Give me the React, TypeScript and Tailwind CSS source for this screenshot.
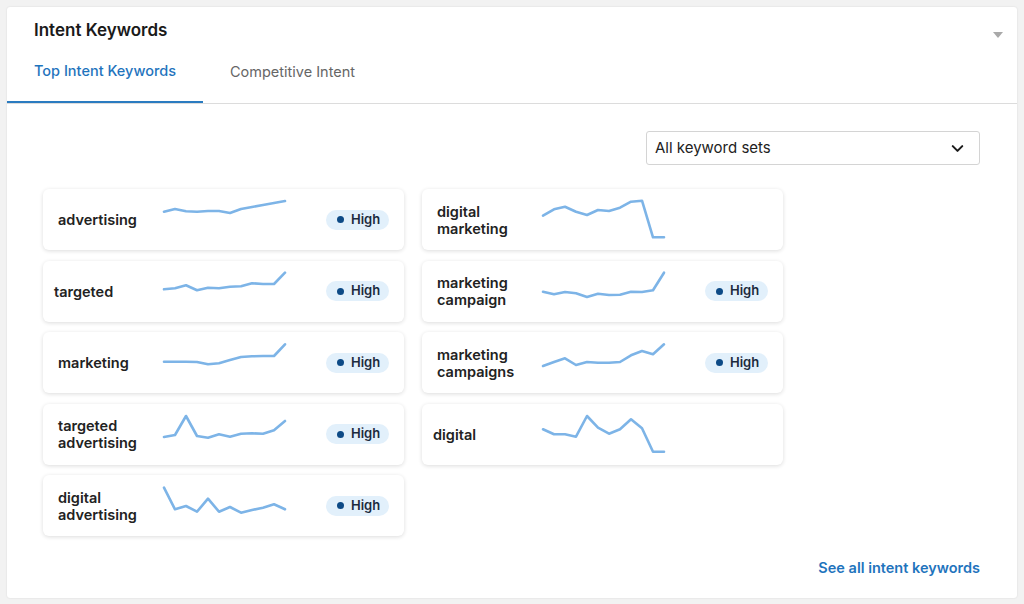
import { ChevronDown } from 'lucide-react';

interface Keyword {
  label: string[];
  points: number[];
  high: boolean;
  indent?: boolean;
}

const LEFT: Keyword[] = [
  { label: ['advertising'], points: [22.7, 20, 22.3, 22.7, 22, 22, 24, 20, 18, 16, 14, 12], high: true },
  { label: ['targeted'], points: [28.3, 27.3, 24.3, 29.3, 26.7, 27.3, 25.7, 25.3, 22.3, 23, 23, 11.7], high: true, indent: true },
  { label: ['marketing'], points: [29.7, 29.7, 29.7, 30, 32.3, 31.3, 28, 25, 24.3, 24, 24, 12.3], high: true },
  { label: ['targeted', 'advertising'], points: [33, 31, 12, 32, 33.7, 30.3, 32.7, 29.7, 29.3, 29.7, 26.3, 17], high: true },
  { label: ['digital', 'advertising'], points: [12.7, 34.3, 31, 36.7, 23.7, 36.7, 32, 37.7, 35, 32.7, 29.3, 34.3], high: true },
];

const RIGHT: Keyword[] = [
  { label: ['digital', 'marketing'], points: [26.7, 20.3, 17.7, 22.7, 26, 21, 22, 18.7, 12.7, 11.7, 48.3, 48.3], high: false },
  { label: ['marketing', 'campaign'], points: [30.7, 33.3, 31, 32.3, 36, 32.7, 34, 33.7, 30.7, 31, 29.3, 11.7], high: true },
  { label: ['marketing', 'campaigns'], points: [34, 30, 26.3, 33, 30, 30.7, 30.7, 30, 23.3, 19, 22.3, 12.3], high: true },
  { label: ['digital'], points: [25.3, 30.3, 30.3, 32.7, 12, 23.7, 29.7, 25.3, 15.3, 24.3, 47.7, 47.7], high: false, indent: true },
];

function Sparkline({ points }: { points: number[] }) {
  const d = points.map((y, i) => `${(i * 11 + 1).toFixed(1)},${y}`).join(' ');
  return (
    <svg width="126" height="61" viewBox="0 0 126 61" className="shrink-0 overflow-visible">
      <polyline
        points={d}
        fill="none"
        stroke="#7db4e7"
        strokeWidth="2.6"
        strokeLinejoin="round"
        strokeLinecap="round"
      />
    </svg>
  );
}

function KeywordCard({ kw }: { kw: Keyword }) {
  return (
    <div className="flex h-[61px] w-[361px] items-center rounded-md bg-white pr-[15px] shadow-[0_1px_4px_rgba(0,0,0,0.14)]">
      <div className={`w-[120px] shrink-0 text-[14.5px] font-semibold leading-[17px] text-[#222] ${kw.indent ? 'pl-[11px]' : 'pl-[15px]'}`}>
        {kw.label.map((l) => (
          <div key={l}>{l}</div>
        ))}
      </div>
      <Sparkline points={kw.points} />
      <div className="flex-1" />
      {kw.high && (
        <div className="flex h-[20px] w-[63px] items-center gap-[7px] rounded-full bg-[#e2f0fb] pl-[11px]">
          <span className="h-[7px] w-[7px] rounded-full bg-[#0d4a86]" />
          <span className="text-[13px] font-semibold text-[#1c2a3d]">High</span>
        </div>
      )}
    </div>
  );
}

export default function App() {
  return (
    <div className="min-h-[604px] bg-[#f2f2f2] p-[7px] font-['Inter',sans-serif]">
      <div className="relative h-[591px] w-[1010px] rounded-[3px] bg-white shadow-[0_0_2px_rgba(0,0,0,0.12)]">
        <div className="pl-[27px] pt-[15px]">
          <h2 className="text-[17px] font-semibold leading-[17px] text-[#1a1a1a]">Intent Keywords</h2>
        </div>
        <div className="absolute right-[14px] top-[25px] h-0 w-0 border-x-[5px] border-t-[6px] border-x-transparent border-t-[#a9a9a9]" />

        <div className="flex border-b border-[#dcdcdc]">
          <div className="flex h-[64px] w-[196px] items-center border-b-2 border-[#2a7bc0] pl-[27px] pt-[1px] text-[14.5px] font-medium text-[#1f74bd]">
            Top Intent Keywords
          </div>
          <div className="flex h-[64px] items-center pl-[27px] pt-[1px] text-[14.5px] text-[#666]">
            Competitive Intent
          </div>
        </div>

        <div className="flex justify-end pr-[37px] pt-[27px]">
          <div className="flex h-[34px] w-[334px] items-center justify-between rounded-[3px] border border-[#d4d4d4] pl-[8px] pr-[12px] text-[15px] text-[#222]">
            <span>All keyword sets</span>
            <ChevronDown size={19} strokeWidth={2.6} className="text-[#1a1a1a]" />
          </div>
        </div>

        <div className="flex gap-[18px] pl-[36px] pt-[24px]">
          <div className="flex flex-col gap-[10.5px]">
            {LEFT.map((kw) => (
              <KeywordCard key={kw.label.join(' ')} kw={kw} />
            ))}
          </div>
          <div className="flex flex-col gap-[10.5px]">
            {RIGHT.map((kw) => (
              <KeywordCard key={kw.label.join(' ')} kw={kw} />
            ))}
          </div>
        </div>

        <div className="flex justify-end pr-[37px] pt-[21px]">
          <a className="text-[14.5px] font-semibold text-[#1f74bd]">See all intent keywords</a>
        </div>
      </div>
    </div>
  );
}
